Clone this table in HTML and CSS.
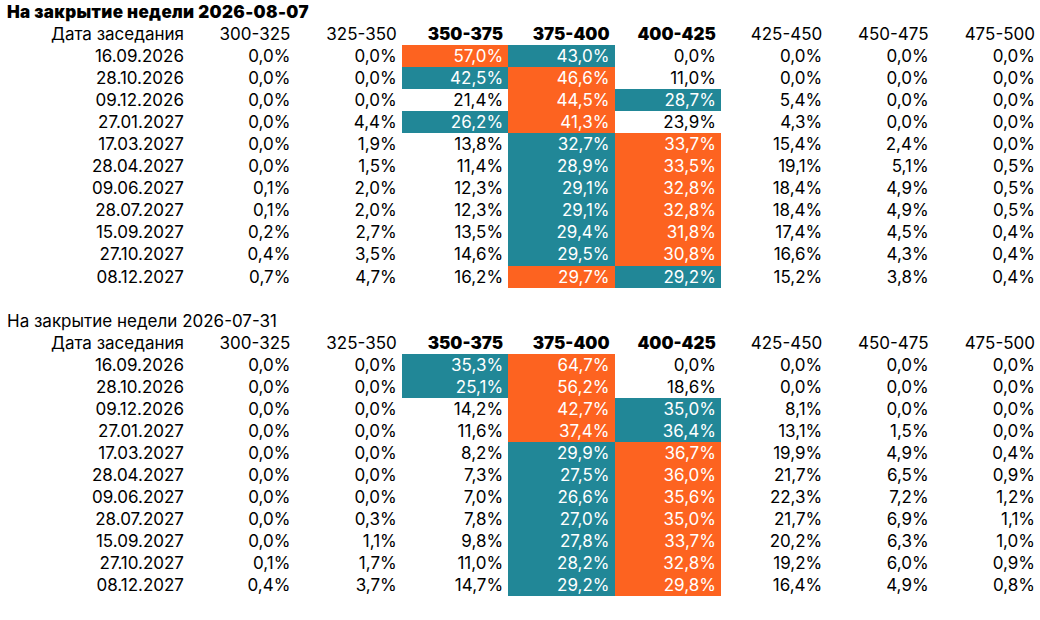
FILE: index.html
```html
<!DOCTYPE html>
<html lang="ru">
<head>
<meta charset="utf-8">
<title>Вероятности ставок</title>
<link rel="stylesheet" href="styles.css">
</head>
<body>
<main class="page">
  <section class="week">
    <div class="title title-bold">На закрытие недели 2026-08-07</div>
    <div class="grid">
      <div class="c hd">Дата заседания</div><div class="c hd">300-325</div><div class="c hd">325-350</div><div class="c hd b">350-375</div><div class="c hd b">375-400</div><div class="c hd b">400-425</div><div class="c hd">425-450</div><div class="c hd">450-475</div><div class="c hd">475-500</div>

      <div class="c">16.09.2026</div><div class="c">0,0%</div><div class="c">0,0%</div><div class="c o">57,0%</div><div class="c t">43,0%</div><div class="c">0,0%</div><div class="c">0,0%</div><div class="c">0,0%</div><div class="c">0,0%</div>
      <div class="c">28.10.2026</div><div class="c">0,0%</div><div class="c">0,0%</div><div class="c t">42,5%</div><div class="c o">46,6%</div><div class="c">11,0%</div><div class="c">0,0%</div><div class="c">0,0%</div><div class="c">0,0%</div>
      <div class="c">09.12.2026</div><div class="c">0,0%</div><div class="c">0,0%</div><div class="c">21,4%</div><div class="c o">44,5%</div><div class="c t">28,7%</div><div class="c">5,4%</div><div class="c">0,0%</div><div class="c">0,0%</div>
      <div class="c">27.01.2027</div><div class="c">0,0%</div><div class="c">4,4%</div><div class="c t">26,2%</div><div class="c o">41,3%</div><div class="c">23,9%</div><div class="c">4,3%</div><div class="c">0,0%</div><div class="c">0,0%</div>
      <div class="c">17.03.2027</div><div class="c">0,0%</div><div class="c">1,9%</div><div class="c">13,8%</div><div class="c t">32,7%</div><div class="c o">33,7%</div><div class="c">15,4%</div><div class="c">2,4%</div><div class="c">0,0%</div>
      <div class="c">28.04.2027</div><div class="c">0,0%</div><div class="c">1,5%</div><div class="c">11,4%</div><div class="c t">28,9%</div><div class="c o">33,5%</div><div class="c">19,1%</div><div class="c">5,1%</div><div class="c">0,5%</div>
      <div class="c">09.06.2027</div><div class="c">0,1%</div><div class="c">2,0%</div><div class="c">12,3%</div><div class="c t">29,1%</div><div class="c o">32,8%</div><div class="c">18,4%</div><div class="c">4,9%</div><div class="c">0,5%</div>
      <div class="c">28.07.2027</div><div class="c">0,1%</div><div class="c">2,0%</div><div class="c">12,3%</div><div class="c t">29,1%</div><div class="c o">32,8%</div><div class="c">18,4%</div><div class="c">4,9%</div><div class="c">0,5%</div>
      <div class="c">15.09.2027</div><div class="c">0,2%</div><div class="c">2,7%</div><div class="c">13,5%</div><div class="c t">29,4%</div><div class="c o">31,8%</div><div class="c">17,4%</div><div class="c">4,5%</div><div class="c">0,4%</div>
      <div class="c">27.10.2027</div><div class="c">0,4%</div><div class="c">3,5%</div><div class="c">14,6%</div><div class="c t">29,5%</div><div class="c o">30,8%</div><div class="c">16,6%</div><div class="c">4,3%</div><div class="c">0,4%</div>
      <div class="c">08.12.2027</div><div class="c">0,7%</div><div class="c">4,7%</div><div class="c">16,2%</div><div class="c o">29,7%</div><div class="c t">29,2%</div><div class="c">15,2%</div><div class="c">3,8%</div><div class="c">0,4%</div>
    </div>
  </section>

  <section class="week">
    <div class="title">На закрытие недели 2026-07-31</div>
    <div class="grid">
      <div class="c hd">Дата заседания</div><div class="c hd">300-325</div><div class="c hd">325-350</div><div class="c hd b">350-375</div><div class="c hd b">375-400</div><div class="c hd b">400-425</div><div class="c hd">425-450</div><div class="c hd">450-475</div><div class="c hd">475-500</div>

      <div class="c">16.09.2026</div><div class="c">0,0%</div><div class="c">0,0%</div><div class="c t">35,3%</div><div class="c o">64,7%</div><div class="c">0,0%</div><div class="c">0,0%</div><div class="c">0,0%</div><div class="c">0,0%</div>
      <div class="c">28.10.2026</div><div class="c">0,0%</div><div class="c">0,0%</div><div class="c t">25,1%</div><div class="c o">56,2%</div><div class="c">18,6%</div><div class="c">0,0%</div><div class="c">0,0%</div><div class="c">0,0%</div>
      <div class="c">09.12.2026</div><div class="c">0,0%</div><div class="c">0,0%</div><div class="c">14,2%</div><div class="c o">42,7%</div><div class="c t">35,0%</div><div class="c">8,1%</div><div class="c">0,0%</div><div class="c">0,0%</div>
      <div class="c">27.01.2027</div><div class="c">0,0%</div><div class="c">0,0%</div><div class="c">11,6%</div><div class="c o">37,4%</div><div class="c t">36,4%</div><div class="c">13,1%</div><div class="c">1,5%</div><div class="c">0,0%</div>
      <div class="c">17.03.2027</div><div class="c">0,0%</div><div class="c">0,0%</div><div class="c">8,2%</div><div class="c t">29,9%</div><div class="c o">36,7%</div><div class="c">19,9%</div><div class="c">4,9%</div><div class="c">0,4%</div>
      <div class="c">28.04.2027</div><div class="c">0,0%</div><div class="c">0,0%</div><div class="c">7,3%</div><div class="c t">27,5%</div><div class="c o">36,0%</div><div class="c">21,7%</div><div class="c">6,5%</div><div class="c">0,9%</div>
      <div class="c">09.06.2027</div><div class="c">0,0%</div><div class="c">0,0%</div><div class="c">7,0%</div><div class="c t">26,6%</div><div class="c o">35,6%</div><div class="c">22,3%</div><div class="c">7,2%</div><div class="c">1,2%</div>
      <div class="c">28.07.2027</div><div class="c">0,0%</div><div class="c">0,3%</div><div class="c">7,8%</div><div class="c t">27,0%</div><div class="c o">35,0%</div><div class="c">21,7%</div><div class="c">6,9%</div><div class="c">1,1%</div>
      <div class="c">15.09.2027</div><div class="c">0,0%</div><div class="c">1,1%</div><div class="c">9,8%</div><div class="c t">27,8%</div><div class="c o">33,7%</div><div class="c">20,2%</div><div class="c">6,3%</div><div class="c">1,0%</div>
      <div class="c">27.10.2027</div><div class="c">0,1%</div><div class="c">1,7%</div><div class="c">11,0%</div><div class="c t">28,2%</div><div class="c o">32,8%</div><div class="c">19,2%</div><div class="c">6,0%</div><div class="c">0,9%</div>
      <div class="c">08.12.2027</div><div class="c">0,4%</div><div class="c">3,7%</div><div class="c">14,7%</div><div class="c t">29,2%</div><div class="c o">29,8%</div><div class="c">16,4%</div><div class="c">4,9%</div><div class="c">0,8%</div>
    </div>
  </section>
</main>
</body>
</html>
```

FILE: styles.css
```css
html, body {
  margin: 0;
  padding: 0;
  background: #ffffff;
}

body {
  font-family: Inter, "Noto Sans", "DejaVu Sans", sans-serif;
  font-size: 17px;
  color: #000000;
}

.page {
  width: 1040px;
  padding-top: 1px;
  display: flex;
  flex-direction: column;
  gap: 22px;
}

.week {
  display: flex;
  flex-direction: column;
}

.title {
  height: 22px;
  line-height: 22px;
  padding-left: 7px;
  white-space: nowrap;
}

.title-bold {
  font-weight: 900;
  letter-spacing: 0.35px;
}

.grid {
  display: grid;
  grid-template-columns: 189px repeat(8, 1fr);
  grid-auto-rows: 22.06px;
}

.c {
  text-align: right;
  padding-right: 5px;
  line-height: 23px;
  white-space: nowrap;
}

.hd.b {
  font-weight: 900;
}

.o {
  background: #fd6320;
  color: #ffffff;
}

.t {
  background: #218797;
  color: #ffffff;
}
```
